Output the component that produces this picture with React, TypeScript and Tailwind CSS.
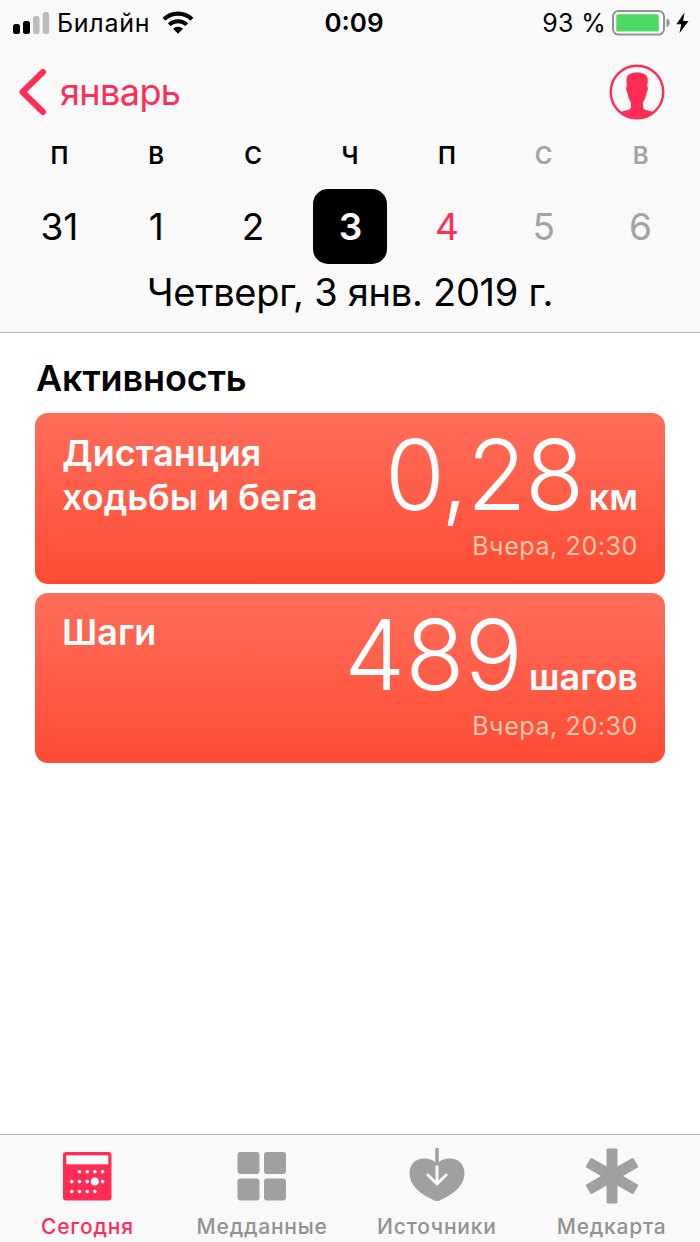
import type { ReactNode } from "react";

type Day = { letter: string; date: string; kind: "normal" | "selected" | "today" | "future" };

const week: Day[] = [
    { letter: "П", date: "31", kind: "normal" },
    { letter: "В", date: "1", kind: "normal" },
    { letter: "С", date: "2", kind: "normal" },
    { letter: "Ч", date: "3", kind: "selected" },
    { letter: "П", date: "4", kind: "today" },
    { letter: "С", date: "5", kind: "future" },
    { letter: "В", date: "6", kind: "future" },
];

const dateStyle = {
    normal: "text-black",
    selected: "rounded-[15px] bg-black pl-[1px] font-semibold text-white",
    today: "text-[#ff2d55]",
    future: "text-[#a3a3a3]",
};

const StatusBar = () => (
    <div className="grid h-[46px] grid-cols-3 items-center text-[25px] leading-[46px]">
        <div className="flex items-center pl-[13px]">
            <svg width="37" height="22" viewBox="0 0 37 22">
                <rect x="0" y="12" width="7" height="10" rx="2.5" fill="#000" />
                <rect x="10" y="9" width="7" height="13" rx="2.5" fill="#000" />
                <rect x="20" y="4" width="6.5" height="18" rx="2.5" fill="#bcbcbc" />
                <rect x="29.7" y="0" width="6.5" height="22" rx="2.5" fill="#bcbcbc" />
            </svg>
            <span className="ml-[7px] tracking-[0.7px]">Билайн</span>
            <svg className="ml-[12px]" width="32" height="24" viewBox="0 0 32 24">
                <path d="M2 8.2A20.5 20.5 0 0 1 30 8.2" fill="none" stroke="#000" strokeWidth="4.2" />
                <path d="M7.2 13.6A13 13 0 0 1 24.8 13.6" fill="none" stroke="#000" strokeWidth="4" />
                <path d="M11 17.8a7.3 7.3 0 0 1 10 0l-5 5z" fill="#000" />
            </svg>
        </div>
        <div className="pl-[8px] text-center text-[26px] font-semibold">0:09</div>
        <div className="flex items-center justify-end pr-[11px]">
            <span className="tracking-[0.3px]">93 %</span>
            <svg className="ml-[6px]" width="59" height="26" viewBox="0 0 59 26">
                <rect x="1" y="1" width="51" height="23.6" rx="5.5" fill="#fff" stroke="#929292" strokeWidth="2" />
                <rect x="4.3" y="4.2" width="42.5" height="17.2" rx="1.5" fill="#4cd964" />
                <path d="M54.5 8.5q3.2 1 3.2 4.3t-3.2 4.3z" fill="#929292" />
            </svg>
            <svg className="ml-[5px]" width="13" height="22" viewBox="0 0 13 22">
                <path d="M8.5.5.3 12.3h5L3.4 21.2 12.6 9H7.2z" fill="#000" />
            </svg>
        </div>
    </div>
);

const NavRow = () => (
    <div className="flex h-[92px] items-center justify-between pr-[35px] pl-[18px] text-[#ff2d55]">
        <div className="flex items-center">
            <svg width="28" height="46" viewBox="0 0 28 46">
                <path d="M25 3 4.500 23 25 43" fill="none" stroke="currentColor" strokeWidth="6" strokeLinecap="round" strokeLinejoin="round" />
            </svg>
            <span className="ml-[14px] text-[36px] leading-[46px] tracking-[-0.6px]">январь</span>
        </div>
        <svg width="56" height="56" viewBox="0 0 56 56">
            <circle cx="28" cy="28" r="26.3" fill="none" stroke="currentColor" strokeWidth="2.4" />
            <path
                d="M17.5 15.5C17.5 10.5 21.5 8.5 28 8.5s10.8 2 10.8 7c0 2.5-.4 5-.6 7 1.3.3.6 4.6-.7 6.5-.5 3.5-1.5 6.5-3.2 8.8-.4 2.2-.4 5 .4 7 1 1.6 6 1.6 9.8 3.3A26.800 26.800 0 0 1 11.500 48.100c3.800-1.700 8.800-1.700 9.800-3.300.8-2 .8-4.800.4-7-1.700-2.300-2.700-5.300-3.200-8.800-1.300-1.900-2-6.200-.7-6.500-.2-2-.3-4.500-.3-7z"
                fill="currentColor"
            />
        </svg>
    </div>
);

const MetricCard = ({ title, value, unit, tracking }: { title: ReactNode; value: string; unit: string; tracking: string }) => (
    <div className="flex h-[170.5px] justify-between rounded-[13px] bg-linear-to-b from-[#ff6d5a] to-[#ff4a32] px-[27px] text-white">
        <div className="pt-[17.5px] text-[36px] leading-[44px] font-semibold">{title}</div>
        <div className="flex flex-col items-end">
            <div className="flex h-[118px] items-baseline pt-[14px] leading-[96px]">
                <span className={`text-[97px] font-light ${tracking}`}>{value}</span>
                <span className="ml-[6px] text-[36px] font-semibold">{unit}</span>
            </div>
            <div className="text-[25px] leading-[30px] tracking-[0.6px] text-[#ffc8ac]">Вчера, 20:30</div>
        </div>
    </div>
);

const CalendarIcon = () => {
    const rows = [[1, 2, 3, 4], [0, 1, 2, 4], [0, 1, 2, 3]];
    return (
        <svg width="56" height="56" viewBox="0 0 56 56">
            <rect x="4" y="4" width="48.5" height="48.5" rx="3" fill="#ff2d55" />
            <rect x="7.3" y="7.3" width="42" height="9" fill="#fff" />
            {rows.map((cols, row) =>
                cols.map((col) => <circle key={`${row}-${col}`} cx={12.8 + col * 7.7} cy={23.7 + row * 9.9} r="1.8" fill="#fff" />)
            )}
            <circle cx="35.8" cy="33.6" r="4" fill="#fff" />
        </svg>
    );
};

const GridIcon = () => (
    <svg width="56" height="56" viewBox="0 0 56 56" fill="#a0a0a0">
        <rect x="3.5" y="4" width="22" height="22" rx="3" />
        <rect x="30" y="4" width="22" height="22" rx="3" />
        <rect x="3.5" y="30.5" width="22" height="22" rx="3" />
        <rect x="30" y="30.5" width="22" height="22" rx="3" />
    </svg>
);

const HeartIcon = () => (
    <svg width="56" height="56" viewBox="0 0 56 56">
        <path d="M28 16C25 12 20 10.500 15 10.500 6 10.500.5 17 .5 25.500.5 37 11 46 25.500 52.500q2.500 1.200 5 0C45 46 55.500 37 55.500 25.500c0-8.500-5.500-15-14.500-15-5 0-10 1.500-13 5.500z" fill="#a0a0a0" />
        <path d="M28 17V34" stroke="#f8f8f8" strokeWidth="3" />
        <path d="M18 26 28 36 38 26" fill="none" stroke="#f8f8f8" strokeWidth="3" />
        <path d="M28 0v17.500" stroke="#a0a0a0" strokeWidth="3.600" />
    </svg>
);

const StarIcon = () => (
    <svg width="56" height="56" viewBox="0 0 56 56" fill="#a0a0a0">
        {[0, 60, 120].map((angle) => (
            <rect key={angle} x="22.5" y="0.5" width="11" height="55" rx="1.5" transform={`rotate(${angle} 28 28)`} />
        ))}
    </svg>
);

const tabs = [
    { label: "Сегодня", icon: <CalendarIcon />, active: true },
    { label: "Медданные", icon: <GridIcon />, active: false },
    { label: "Источники", icon: <HeartIcon />, active: false },
    { label: "Медкарта", icon: <StarIcon />, active: false },
];

const App = () => {
    return (
        <div className="flex h-[1242px] w-[700px] flex-col overflow-hidden bg-white font-['Inter','Liberation_Sans',sans-serif] text-black">
            <header className="h-[333px] shrink-0 border-b border-[#b5b5b5] bg-[#f9f9f9]">
                <StatusBar />
                <NavRow />
                <div className="grid grid-cols-7 px-[11px]">
                    {week.map((day) => (
                        <div key={day.date} className="flex flex-col items-center">
                            <div className={`h-[51px] text-[24px] leading-[35px] font-[560] ${day.kind === "future" ? "text-[#a3a3a3]" : ""}`}>
                                {day.letter}
                            </div>
                            <div className={`flex h-[75px] w-[74px] items-center justify-center text-[37px] leading-[75px] ${dateStyle[day.kind]}`}>
                                {day.date}
                            </div>
                        </div>
                    ))}
                </div>
                <div className="text-center text-[38px] leading-[57px] tracking-[-0.28px]">Четверг, 3 янв. 2019 г.</div>
            </header>
            <main className="flex-1 px-[35px] pt-[23px]">
                <h1 className="h-[57px] pl-[1px] text-[36px] leading-[45px] font-semibold tracking-[-0.1px]">Активность</h1>
                <div className="flex flex-col gap-[9px]">
                    <MetricCard title={<>Дистанция<br />ходьбы и бега</>} value="0,28" unit="км" tracking="tracking-[-1.5px]" />
                    <MetricCard title="Шаги" value="489" unit="шагов" tracking="tracking-normal" />
                </div>
            </main>
            <nav className="grid h-[108px] shrink-0 grid-cols-4 border-t border-[#b5b5b5] bg-[#f9f9f9] pr-[1px]">
                {tabs.map((tab) => (
                    <div key={tab.label} className={`flex flex-col items-center pt-[13px] ${tab.active ? "text-[#ff2d55]" : "text-[#929292]"}`}>
                        {tab.icon}
                        <span className="mt-[9px] text-[21px] leading-[28px] font-medium tracking-[0.8px]">{tab.label}</span>
                    </div>
                ))}
            </nav>
        </div>
    );
};

export default App;
